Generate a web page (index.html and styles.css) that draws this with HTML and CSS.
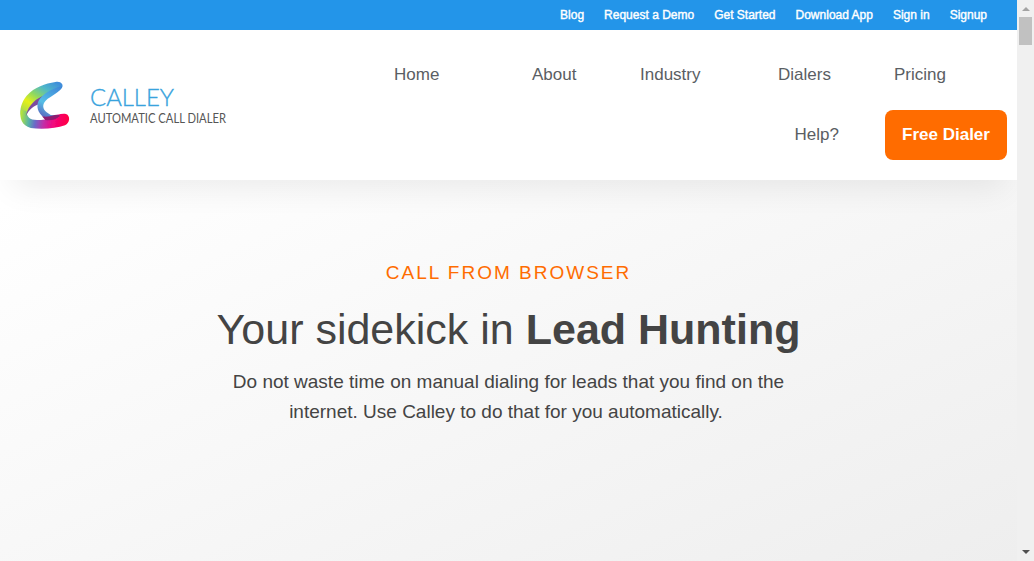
FILE: index.html
```html
<!DOCTYPE html>
<html lang="en">
<head>
<meta charset="utf-8">
<title>Calley Automatic Call Dialer</title>
<link rel="stylesheet" href="styles.css">
</head>
<body>
<div class="page">
  <div class="topbar">
    <a>Blog</a><a>Request a Demo</a><a>Get Started</a><a>Download App</a><a>Sign in</a><a>Signup</a>
  </div>
  <header class="header">
    <svg class="logo" width="240" height="60" viewBox="10 75 240 60" role="img" aria-label="Calley">
      <defs>
        <linearGradient id="outer" gradientUnits="userSpaceOnUse" x1="155" y1="30" x2="70" y2="165">
          <stop offset="0" stop-color="#3f8ddb"/><stop offset=".22" stop-color="#4fb8c8"/><stop offset=".42" stop-color="#8fd860"/><stop offset=".6" stop-color="#e6f018"/><stop offset=".76" stop-color="#b8e040"/><stop offset="1" stop-color="#48a5c4"/>
        </linearGradient>
        <linearGradient id="inner" gradientUnits="userSpaceOnUse" x1="150" y1="35" x2="100" y2="130">
          <stop offset="0" stop-color="#3f86d8"/><stop offset=".6" stop-color="#55bfe6"/><stop offset="1" stop-color="#5a62bd"/>
        </linearGradient>
        <linearGradient id="foot" gradientUnits="userSpaceOnUse" x1="34" y1="115" x2="172" y2="135">
          <stop offset="0" stop-color="#b4e33a"/><stop offset=".18" stop-color="#55b4a8"/><stop offset=".32" stop-color="#6a6ac8"/><stop offset=".5" stop-color="#c030a8"/><stop offset=".7" stop-color="#f00880"/><stop offset="1" stop-color="#ff0048"/>
        </linearGradient>
        <filter id="soft" x="-10%" y="-10%" width="120%" height="120%"><feGaussianBlur stdDeviation="1.6"/></filter>
      </defs>
      <g filter="url(#soft)" transform="translate(10 75) scale(.3333)">
        <path d="M136 21C152 17 162 28 156 38C148 50 118 58 104 66C80 70 57 90 50 122L33 122C28 104 34 82 50 62C74 36 106 26 136 21Z" fill="url(#outer)"/>
        <path d="M32 106C28 130 36 152 62 159C98 164 138 160 165 151C180 144 182 122 168 117C150 115 142 121 124 124C116 132 98 136 84 135C60 136 50 126 49 108Z" fill="url(#foot)"/>
        <path d="M106 60C80 70 56 86 47 124C59 100 72 93 86 88Z" fill="#7c4b9e"/>
        <path d="M157 33C153 52 122 62 107 77C96 88 98 102 110 112Q120 122 134 121Q124 134 108 130C88 122 78 100 84 82C90 64 118 42 157 33Z" fill="url(#inner)"/>
        <path d="M96 124Q114 127 134 120Q148 118 150 123Q134 138 106 135Z" fill="#8d1a70"/>
      </g>
      <text class="brand" x="90" y="105.5" textLength="84" lengthAdjust="spacingAndGlyphs">CALLEY</text>
      <text class="tagline" x="90" y="123" textLength="136" lengthAdjust="spacingAndGlyphs">AUTOMATIC CALL DIALER</text>
    </svg>
    <nav class="nav">
      <div class="nav-row"><a>Home</a><a>About</a><a>Industry</a><a>Dialers</a><a>Pricing</a></div>
      <div class="nav-row nav-actions"><a>Help?</a><a class="cta">Free Dialer</a></div>
    </nav>
  </header>
  <main class="hero">
    <p class="eyebrow">CALL FROM BROWSER</p>
    <h1>Your sidekick in <b>Lead Hunting</b></h1>
    <p class="lead">Do not waste time on manual dialing for leads that you find on the<br><span class="second">internet. Use Calley to do that for you automatically.</span></p>
  </main>
</div>
<div class="scrollbar">
  <div class="up"></div><div class="thumb"></div><div class="down"></div>
</div>
</body>
</html>
```
FILE: styles.css
```css
* { box-sizing: border-box; }
body { margin: 0; height: 561px; display: flex; overflow: hidden; font-family: "Liberation Sans", Arial, sans-serif; color: #444; }
.page { width: 1017px; height: 561px; display: flex; flex-direction: column; overflow: hidden; background: linear-gradient(155deg, #fff 20%, #eee 100%); }
.topbar { height: 30px; flex: none; display: flex; justify-content: flex-end; gap: 20px; padding-right: 30px; background: #2395e9; color: #fff; font-size: 12px; line-height: 30px; -webkit-text-stroke: .4px #fff; }
.header { height: 150px; flex: none; display: flex; justify-content: space-between; padding: 20px 10px; background: #fff; box-shadow: 0 20px 30px -12px rgba(0,0,0,.075); }
.logo { margin-top: 25px; }
.brand { font-family: Lato, sans-serif; font-weight: 300; font-size: 24px; fill: #39a3dd; stroke: #39a3dd; stroke-width: .35px; }
.tagline { font-family: Lato, sans-serif; font-size: 12.5px; fill: #555; }
.nav { width: 613px; font-size: 17px; color: #5a5e63; }
.nav-row { height: 50px; line-height: 50px; display: grid; grid-template-columns: 138px 108px 138px 116px 113px; }
.nav-actions { margin-top: 10px; display: flex; justify-content: flex-end; gap: 46px; }
.cta { width: 122px; border-radius: 8px; background: #ff6c00; color: #fff; font-weight: bold; text-align: center; }
.hero { text-align: center; padding-top: 78px; }
.eyebrow { margin: 0; font-size: 19px; line-height: 30px; letter-spacing: 2px; color: #ff6c00; }
h1 { margin: 15px 0 0; font-size: 43px; line-height: 52px; font-weight: normal; white-space: nowrap; }
.lead { margin: 12px 0 0; font-size: 19px; line-height: 30px; }
.second { padding-right: 5px; }
.scrollbar { width: 17px; height: 561px; background: #f0f0f0; display: flex; flex-direction: column; align-items: center; }
.up { margin-top: 7px; border: 4px solid transparent; border-top: 0; border-bottom-color: #a3a3a3; }
.thumb { width: 13px; height: 28px; margin-top: 6px; background: #c1c1c1; }
.down { margin-top: auto; margin-bottom: 7px; border: 4px solid transparent; border-bottom: 0; border-top-color: #505050; }
```
